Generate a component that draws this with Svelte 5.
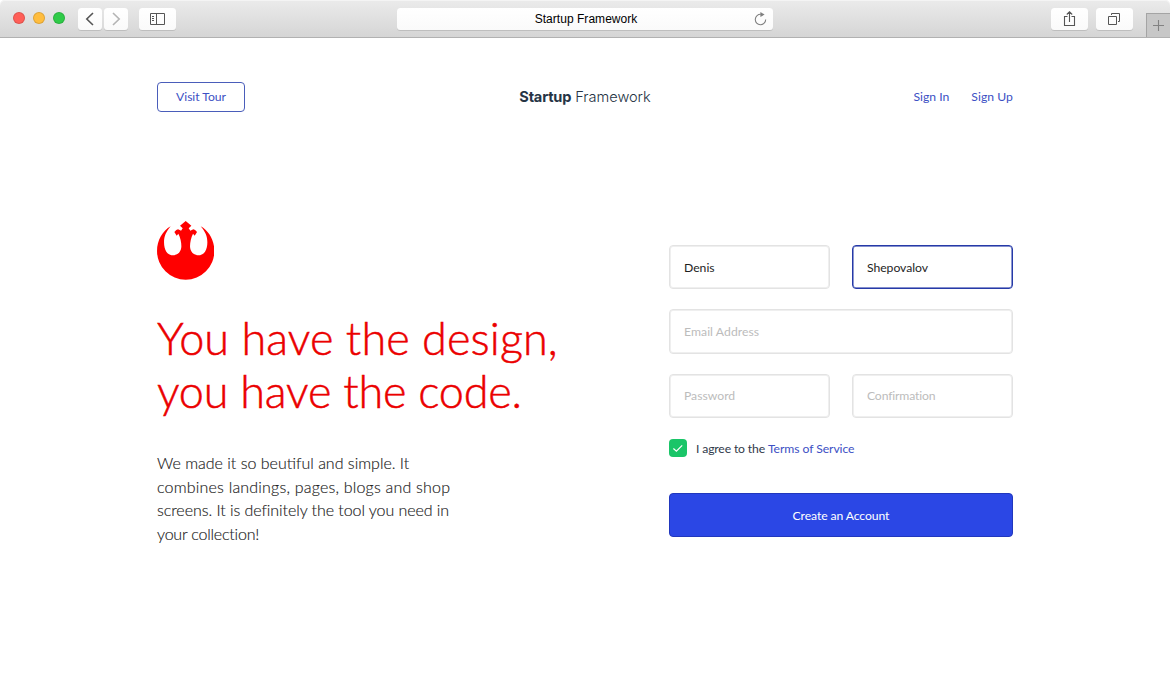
<script>
  const copy = [
    { text: 'We made it so beutiful and simple. It', name: 'c1' },
    { text: 'combines landings, pages, blogs and shop', name: 'c2' },
    { text: 'screens. It is definitely the tool you need in', name: 'c3' },
    { text: 'your collection!', name: 'c4' }
  ];
  const fields = [
    { name: 'first', label: 'First name', value: 'Denis', hint: '' },
    { name: 'last', label: 'Last name', value: 'Shepovalov', hint: '', active: true },
    { name: 'email', label: 'Email', value: '', hint: 'Email Address', wide: true },
    { name: 'password', label: 'Password', value: '', hint: 'Password' },
    { name: 'confirmation', label: 'Confirmation', value: '', hint: 'Confirmation' }
  ];
</script>

<div class="window">
  <header class="toolbar">
    <div class="left">
      <div class="lights"><i class="red"></i><i class="amber"></i><i class="green"></i></div>
      <div class="history">
        <span class="tool arrow"><svg width="24" height="22" viewBox="0 0 24 22"><path d="M15 5 8.8 11 15 17" fill="none" stroke="#555" stroke-width="1.6" /></svg></span>
        <span class="tool arrow"><svg width="24" height="22" viewBox="0 0 24 22"><path d="M9 5l6.2 6L9 17" fill="none" stroke="#b4b4b4" stroke-width="1.6" /></svg></span>
      </div>
      <span class="tool"><svg width="37" height="22" viewBox="0 0 37 22"><path d="M11.5 5.5h14v11h-14zM17.5 5.5v11M13 8.5h2M13 10.5h2M13 12.5h2" fill="none" stroke="#555" /></svg></span>
    </div>
    <div class="address">
      <span class="title">Startup Framework</span>
      <svg class="reload" width="14" height="16" viewBox="0 0 14 16"><path d="M6.9 3.3a5.2 5.2 0 1 0 4.8 5.2" fill="none" stroke="#808080" stroke-width="1.1" /><path d="M6.4 1 10.6 3.6 6.4 6z" fill="#808080" /></svg>
    </div>
    <div class="right">
      <span class="tool"><svg width="37" height="22" viewBox="0 0 37 22"><path d="M16.5 8.5h-3v9h10v-9h-3M18.5 14V4M15.8 6.5l2.7-2.8 2.7 2.8" fill="none" stroke="#555" stroke-width="1.1" /></svg></span>
      <span class="tool"><svg width="37" height="22" viewBox="0 0 37 22"><path d="M12.5 8.5h8v8h-8zM15.5 7V5.5h8v8H22" fill="none" stroke="#555" /></svg></span>
    </div>
    <span class="newtab"><svg width="23" height="24" viewBox="0 0 23 24"><path d="M6 11.5h11M11.5 6v11" fill="none" stroke="#828282" stroke-width="1.1" /></svg></span>
  </header>

  <nav>
    <button class="tour"><span>Visit Tour</span></button>
    <div class="brand"><b>Startup</b><span>Framework</span></div>
    <div class="account"><a class="signin" href="#in">Sign In</a><a class="signup" href="#up">Sign Up</a></div>
  </nav>

  <main>
    <section class="pitch">
      <svg class="logo" width="57.4" height="59" viewBox="36 33 172 177"><path fill="#f00" d="M77 49C53 62 36 91 36 123a86 86 0 0 0 172 0C208 91 191 62 167 49C181 65 187 80 187 97C187 120 177 136 161 136C145 136 135 124 135 109C135 96 138 83 144 71L149 77L156 66Q150 58 145 58Q140 61 136 62L131 55L139 47L122 33L105 47L113 55L108 62Q104 61 99 58Q94 58 88 66L95 77L100 71C106 83 109 96 109 109C109 124 99 136 83 136C67 136 57 120 57 97C57 80 63 65 77 49z" /></svg>
      <h1><span class="h1a">You have the design,</span><span class="h1b">you have the code.</span></h1>
      <p>{#each copy as line}<span class={line.name}>{line.text}</span>{/each}</p>
    </section>

    <form>
      <div class="fields">
        {#each fields as f}
          <input class={f.name} class:wide={f.wide} class:active={f.active} aria-label={f.label} value={f.value} placeholder={f.hint} />
        {/each}
      </div>
      <div class="terms">
        <span class="check"><svg width="18" height="18" viewBox="0 0 18 18"><path d="M4.4 9.5 7.4 12.2 13.2 6.3" fill="none" stroke="#fff" stroke-width="1.2" /></svg></span>
        <span class="agree">I agree to the</span><a class="tos" href="#terms">Terms of Service</a>
      </div>
      <button class="create" type="button"><span>Create an Account</span></button>
    </form>
  </main>
</div>

<style>
  :global(body) { margin: 0; background: #fff; }
  .window { width: 1170px; height: 680px; overflow: hidden; background: #fff; font-family: Lato, "Open Sans", sans-serif; color: #222; }
  svg { display: block; }
  a { color: #3c50c4; text-decoration: none; }
  .toolbar { position: relative; box-sizing: border-box; height: 38px; padding: 8px 37px 0 13px; display: flex; align-items: flex-start; border-bottom: 1px solid #b1b1b1; border-radius: 5px 5px 0 0; background: linear-gradient(#ebebeb, #d5d5d5); box-shadow: inset 0 1px #f4f4f4; }
  .left { display: flex; width: 384px; }
  .lights { display: flex; gap: 8px; padding-top: 4px; margin-right: 13px; }
  .lights i { box-sizing: border-box; width: 12px; height: 12px; border-radius: 50%; border: .5px solid #0002; }
  .red { background: #ff5f58; } .amber { background: #ffbd3e; } .green { background: #2fcb48; }
  .history { display: flex; gap: 2px; margin-right: 11px; }
  .tool { width: 37px; height: 22px; border-radius: 3.5px; background: linear-gradient(#fff, #fafafa); box-shadow: 0 1px #bebebe; }
  .arrow { width: 24px; }
  .address { position: relative; box-sizing: border-box; width: 376px; height: 22px; padding-left: 2px; border-radius: 3.5px; background: linear-gradient(#fff, #fafafa); box-shadow: 0 1px #bebebe; text-align: center; font: 12px/22px "Liberation Sans", Arial, sans-serif; color: #000; }
  .title { letter-spacing: .04px; }
  .reload { position: absolute; right: 5px; top: 3px; }
  .right { display: flex; gap: 8px; margin-left: auto; }
  .newtab { position: absolute; right: 0; bottom: 0; width: 23px; height: 23px; border: solid #a4a4a4; border-width: 1px 0 0 1px; background: #c7c7c7; }

  nav { height: 30px; margin: 44px 157px 0; display: grid; grid-template-columns: 1fr auto 1fr; align-items: center; }
  button { font-family: inherit; padding: 0; }
  .tour { width: 88px; height: 30px; padding-bottom: 1px; border: 1px solid #4a5dba; border-radius: 4px; background: #fff; color: #3c50c4; font-size: 12.2px; letter-spacing: -.05px; }
  .brand { display: flex; gap: 4px; font: 300 14.6px/20px Inter, sans-serif; color: #263445; }
  .brand b { font-weight: 700; letter-spacing: -.2px; }
  .brand span { letter-spacing: -.02px; }
  .account { display: flex; justify-content: flex-end; gap: 22px; padding-bottom: 2px; font-size: 12.2px; }
  .signup { letter-spacing: .05px; }

  main { display: flex; justify-content: space-between; margin: 109px 157px 0; }
  .pitch { width: 420px; }
  h1 { margin: 32px 0 0; font: 300 45px/53px Lato, sans-serif; color: #eb0000; -webkit-text-stroke: .5px #eb0000; }
  h1 span, p span { display: block; width: max-content; white-space: nowrap; }
  .h1a { letter-spacing: .1px; }
  .h1b { letter-spacing: -.2px; }
  p { margin: 33px 0 0; font: 300 16px/23.5px Lato, sans-serif; color: #222; -webkit-text-stroke: .15px #222; }
  .c2 { letter-spacing: .2px; }
  .c3 { letter-spacing: -.06px; }
  .c4 { letter-spacing: -.2px; }

  form { width: 344px; padding-top: 24px; }
  .fields { display: grid; grid-template-columns: 161px 161px; gap: 20px 22px; }
  input { box-sizing: border-box; width: 100%; height: 44.3px; border: 1px solid #e3e3e3; border-radius: 4px; padding: 0 14px; background: #fff; color: #1e1e1e; font: 12.2px Lato, sans-serif; outline: 0; box-shadow: inset 0 0 0 1px #efefef; }
  input::placeholder { color: #bcbcbc; opacity: 1; }
  .wide { grid-column: span 2; }
  .active { border-color: #263aa8; box-shadow: inset 0 0 0 .7px #5c6bbd; }
  .last { letter-spacing: -.04px; }
  .email { letter-spacing: .06px; }
  .confirmation { letter-spacing: -.15px; }
  .terms { display: flex; align-items: center; height: 18px; margin-top: 21px; font-size: 12.2px; line-height: 18px; color: #30394a; }
  .check { width: 18px; height: 18px; border-radius: 4px; background: #1ac568; margin-right: 9px; }
  .agree, .tos { padding-top: 2px; }
  .agree { margin-right: 3px; letter-spacing: -.15px; }
  .tos { letter-spacing: -.08px; }
  .create { display: block; width: 344px; height: 44px; margin-top: 36px; padding-top: 1px; border: 1px solid #2137bd; border-radius: 4px; background: #2b47e5; color: #fff; font-size: 12.2px; letter-spacing: -.1px; }
</style>
